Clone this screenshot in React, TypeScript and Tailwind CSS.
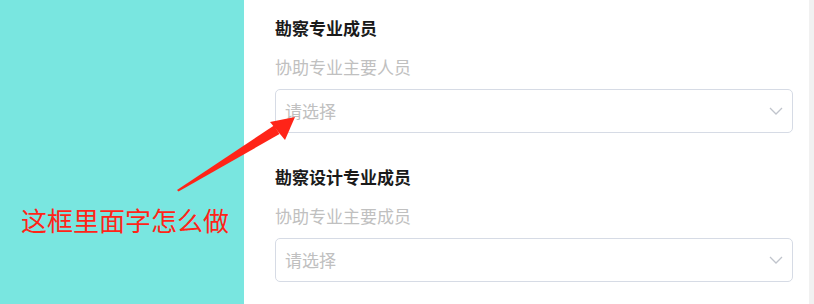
import React from "react";

function Field({ label, hint }: { label: string; hint: string }) {
  return (
    <div className="flex flex-col">
      <div className="text-[17px] leading-[24px] font-bold text-[#1a1a1a]">{label}</div>
      <div className="mt-[15px] text-[17px] leading-[24px] text-[#c0c0c0]">{hint}</div>
      <div className="mt-[10px] h-[44px] rounded-[5px] border border-[#d6dbe5] bg-white flex items-center justify-between pl-[9px] pr-[9px]">
        <span className="text-[17px] leading-[24px] text-[#c0c0c0]">请选择</span>
        <svg width="14" height="10" viewBox="0 0 14 10" fill="none">
          <path d="M1 2 L7 8 L13 2" stroke="#c0c4cc" strokeWidth="1.3" />
        </svg>
      </div>
    </div>
  );
}

export default function App() {
  return (
    <div
      className="relative w-[814px] h-[304px] flex overflow-hidden bg-white"
      style={{ fontFamily: '"Noto Sans CJK SC", "Noto Sans", sans-serif' }}
    >
      <div className="w-[244px] h-full bg-[#79e6e0]" />
      <div className="flex-1 h-full bg-white pl-[31px] pr-[16px] pt-[16px] flex flex-col gap-[32px]">
        <Field label="勘察专业成员" hint="协助专业主要人员" />
        <Field label="勘察设计专业成员" hint="协助专业主要成员" />
      </div>
      <div className="w-[5px] h-full bg-[#f1f1f1]" />

      <div className="absolute left-[21px] top-[203px] text-[26px] leading-[34px] text-[#ff2418]">
        这框里面字怎么做
      </div>
      <svg
        className="absolute left-0 top-0 pointer-events-none"
        width="814"
        height="304"
        viewBox="0 0 814 304"
      >
        <polygon
          points="177,190 274,125.5 279.5,134 178.5,191.5"
          fill="#ff2418"
        />
        <polygon points="295,117 270,122 285,140" fill="#ff2418" />
      </svg>
    </div>
  );
}
